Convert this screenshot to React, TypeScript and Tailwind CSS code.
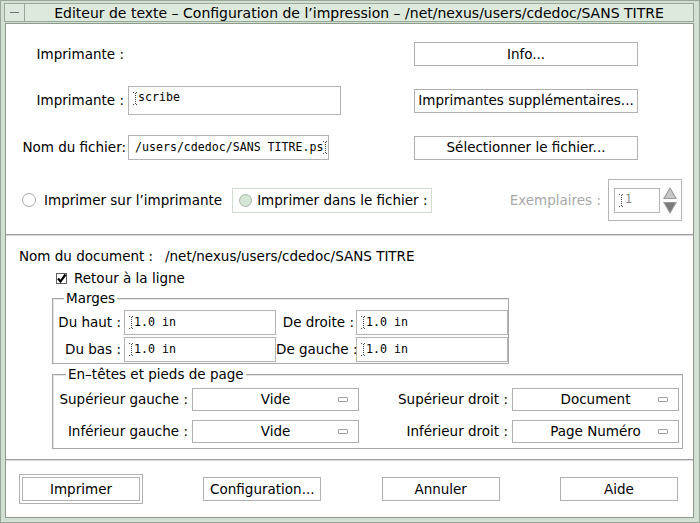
import React from 'react';

const mono = "font-['DejaVu_Sans_Mono',monospace] text-[11.6px]";

const Cursor = () => (
  <svg width="5" height="13" viewBox="0 0 5 13" className="shrink-0">
    <path d="M0 0.5h2M3 0.5h2M2.5 1v11M0 12.5h2M3 12.5h2" stroke="#444" strokeWidth="1" strokeDasharray="1 1" fill="none" />
  </svg>
);

const Field = ({ value, className, cursorEnd }: { value: string; className: string; cursorEnd?: boolean }) => (
  <div className={`flex items-center bg-white border border-[#b4b4b4] pl-[4px] overflow-hidden whitespace-nowrap ${className}`}>
    {!cursorEnd && <Cursor />}
    <span className={`${mono} leading-none whitespace-pre`}>{value}</span>
    {cursorEnd && <Cursor />}
  </div>
);

const Button = ({ label, className }: { label: string; className: string }) => (
  <div className={`flex items-center justify-center bg-white border border-[#b0b0b0] whitespace-nowrap ${className}`}>
    {label}
  </div>
);

const Dropdown = ({ value }: { value: string }) => (
  <div className="relative flex items-center justify-center w-[167px] h-[23px] bg-white border border-[#b0b0b0]">
    <span>{value}</span>
    <span className="absolute right-[10px] top-[8px] w-[10px] h-[5px] border border-[#a0a0a0] rounded-[1px]" />
  </div>
);

const Radio = () => <span className="inline-block w-[14px] h-[14px] rounded-full border border-[#a8a8a8] bg-white" />;

export default function App() {
  return (
    <div className="w-[700px] h-[523px] bg-[#d2dfd2] border border-[#98a898] font-['DejaVu_Sans',sans-serif] text-[13.5px] text-black overflow-hidden">
      {/* Title bar */}
      <div className="flex h-[19px] mt-[2px] ml-[3px] mr-[5px] bg-[#dde9dd] border border-[#98a898]">
        <div className="w-[20px] h-full border-r border-[#98a898] flex items-center justify-center">
          <span className="block w-[9px] h-[1px] bg-[#707070]" />
        </div>
        <div className="flex-1 flex items-center justify-center leading-none whitespace-nowrap text-[14px]">
          Editeur de texte – Configuration de l’impression – /net/nexus/users/cdedoc/SANS TITRE
        </div>
      </div>

      {/* Content */}
      <div className="ml-[4px] mr-[5px] mt-[1px] h-[495px] bg-white border border-[#8c9a8c] flex flex-col">
        {/* Printer section */}
        <div className="grid grid-cols-[122px_286px_224px] items-center mt-[18px] h-[24px]">
          <div className="text-right pr-[4px]">Imprimante :</div>
          <div />
          <Button label="Info..." className="h-[24px]" />
        </div>
        <div className="grid grid-cols-[122px_286px_224px] items-center mt-[20px] h-[29px]">
          <div className="text-right pr-[4px]">Imprimante :</div>
          <Field value="scribe" className="w-[213px] h-[29px] items-start pt-[5px]" />
          <Button label="Imprimantes supplémentaires..." className="h-[24px]" />
        </div>
        <div className="grid grid-cols-[122px_286px_224px] items-center mt-[20px] h-[25px]">
          <div className="text-right pr-[2px] whitespace-nowrap">Nom du fichier:</div>
          <Field value="/users/cdedoc/SANS TITRE.ps" cursorEnd className="w-[201px] h-[25px] pl-[6px]" />
          <Button label="Sélectionner le fichier..." className="h-[24px]" />
        </div>
        <div className="flex items-center mt-[19px] h-[42px] pl-[16px] pr-[11px]">
          <Radio />
          <span className="ml-[8px] whitespace-nowrap">Imprimer sur l’imprimante</span>
          <div className="ml-[10px] w-[200px] h-[25px] border border-[#cfdccf] flex items-center pl-[6px] whitespace-nowrap">
            <span className="inline-block w-[13px] h-[13px] rounded-full border border-[#a8b8a8] bg-[#d6e6d6]" />
            <span className="ml-[5px]">Imprimer dans le fichier :</span>
          </div>
          <span className="ml-auto text-[#a8a8a8] whitespace-nowrap">Exemplaires :</span>
          <div className="ml-[7px] w-[74px] h-[42px] border border-[#b4b4b4] flex items-center pl-[5px]">
            <div className="w-[46px] h-[25px] border border-[#b4b4b4] flex items-center pl-[4px]">
              <Cursor />
              <span className={`${mono} text-[#888] ml-[1px]`}>1</span>
            </div>
            <svg width="16" height="29" viewBox="0 0 16 29" className="ml-[2px]">
              <path d="M8 1L15 13H1Z" fill="#9a9a9a" />
              <path d="M8 28L15 16H1Z" fill="#9a9a9a" />
              <path d="M8 3L13 12H3Z" fill="#c8c8c8" />
              <path d="M8 26L13 17H3Z" fill="#7a7a7a" />
            </svg>
          </div>
        </div>

        <div className="mt-[13px] border-t border-[#a0a0a0] border-b border-b-[#d8d8d8] h-[2px]" />

        {/* Document section */}
        <div className="flex items-center mt-[11px] h-[18px] pl-[13px]">
          <span className="w-[146px]">Nom du document :</span>
          <span>/net/nexus/users/cdedoc/SANS TITRE</span>
        </div>
        <div className="flex items-center mt-[5px] h-[16px] pl-[50px]">
          <svg width="11" height="11" viewBox="0 0 11 11">
            <rect x="0.5" y="0.5" width="10" height="10" fill="white" stroke="#606060" />
            <path d="M2 5.5L4.5 8.5L9.5 1.5" stroke="black" strokeWidth="2.2" fill="none" />
          </svg>
          <span className="ml-[7px]">Retour à la ligne</span>
        </div>

        {/* Marges */}
        <div className="relative mt-[12px] ml-[46px] w-[457px] h-[66px] border border-[#a8a8a8] shadow-[inset_1px_1px_0_#e4e4e4] pt-[11px] pl-[1px]">
          <span className="absolute -top-[10px] left-[11px] bg-white px-[2px] leading-[18px]">Marges</span>
          <div className="grid grid-cols-[70px_152px_80px_152px] items-center gap-y-[2px]">
            <span className="text-right pr-[3px]">Du haut :</span>
            <Field value="1.0 in" className="h-[25px]" />
            <span className="text-right pr-[2px] whitespace-nowrap">De droite :</span>
            <Field value="1.0 in" className="h-[25px]" />
            <span className="text-right pr-[3px]">Du bas :</span>
            <Field value="1.0 in" className="h-[25px]" />
            <span className="text-right pr-[2px] whitespace-nowrap">De gauche :</span>
            <Field value="1.0 in" className="h-[25px]" />
          </div>
        </div>

        {/* En-têtes */}
        <div className="relative mt-[10px] ml-[46px] w-[631px] h-[75px] border border-[#a8a8a8] shadow-[inset_1px_1px_0_#e4e4e4] pt-[13px] pl-[1px]">
          <span className="absolute -top-[10px] left-[13px] bg-white px-[2px] leading-[18px]">En–têtes et pieds de page</span>
          <div className="grid grid-cols-[138px_167px_153px_167px] items-center gap-y-[9px]">
            <span className="text-right pr-[4px] whitespace-nowrap">Supérieur gauche :</span>
            <Dropdown value="Vide" />
            <span className="text-right pr-[4px] whitespace-nowrap">Supérieur droit :</span>
            <Dropdown value="Document" />
            <span className="text-right pr-[4px] whitespace-nowrap">Inférieur gauche :</span>
            <Dropdown value="Vide" />
            <span className="text-right pr-[4px] whitespace-nowrap">Inférieur droit :</span>
            <Dropdown value="Page Numéro" />
          </div>
        </div>

        <div className="mt-[10px] border-t border-[#a0a0a0] border-b border-b-[#d8d8d8] h-[2px]" />

        {/* Actions */}
        <div className="flex items-center justify-between mt-[13px] pl-[13px] pr-[15px]">
          <div className="w-[124px] h-[30px] border border-[#b0b0b0] p-[2px]">
            <Button label="Imprimer" className="w-full h-full" />
          </div>
          <Button label="Configuration..." className="w-[118px] h-[24px]" />
          <Button label="Annuler" className="w-[118px] h-[24px]" />
          <Button label="Aide" className="w-[118px] h-[24px]" />
        </div>
      </div>
    </div>
  );
}
